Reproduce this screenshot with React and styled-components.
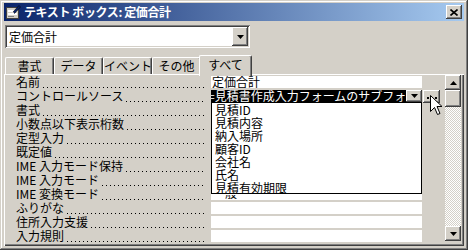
import React from 'react';
import styled, { createGlobalStyle } from 'styled-components';

// Access property sheet — classic Windows look

const GlobalStyle = createGlobalStyle`
  html, body {
    margin: 0;
    padding: 0;
    background: #d4d0c8;
  }
  body {
    font-family: "MS UI Gothic", "Noto Sans CJK JP", sans-serif;
    font-size: 12px;
    color: #000;
  }
`;

const raised = `
  box-shadow: inset -1px -1px #404040, inset 1px 1px #fff,
    inset -2px -2px #808080, inset 2px 2px #d4d0c8;
`;

const sunken = `
  box-shadow: inset 1px 1px #808080, inset -1px -1px #fff,
    inset 2px 2px #404040, inset -2px -2px #d4d0c8;
`;

const labels = [
  '名前',
  'コントロールソース',
  '書式',
  '小数点以下表示桁数',
  '定型入力',
  '既定値',
  'IME 入力モード保持',
  'IME 入力モード',
  'IME 変換モード',
  'ふりがな',
  '住所入力支援',
  '入力規則',
];

// values hidden under the open list are left empty
const values = ['定価合計', '', '', '', '', '', '', '', '', '', '', ''];

const fields = ['見積ID', '見積内容', '納入場所', '顧客ID', '会社名', '氏名', '見積有効期限'];

const tabs = ['書式', 'データ', 'イベント', 'その他', 'すべて'];

//-----*-----*-----*-----*-----//

const Window = styled.div`
  box-sizing: border-box;
  width: 468px;
  height: 250px;
  padding: 3px 4px 4px;
  background: #d4d0c8;
  box-shadow: inset -1px -1px #404040, inset 1px 1px #d4d0c8,
    inset -2px -2px #808080, inset 2px 2px #fff;
  display: flex;
  flex-direction: column;
  overflow: hidden;
  position: relative;
`;

const TitleBar = styled.div`
  height: 18px;
  flex-shrink: 0;
  display: flex;
  align-items: center;
  padding: 0 2px 0 1px;
  background: linear-gradient(to right, #0a246a, #a6caf0);
  color: #fff;
  font-weight: bold;
  font-size: 12px;
`;

const TitleText = styled.span`
  flex: 1;
  margin-left: 3px;
  line-height: 18px;
  white-space: pre;
  letter-spacing: -0.4px;
`;

const CloseButton = styled.div`
  width: 16px;
  height: 14px;
  background: #d4d0c8;
  ${raised}
  display: flex;
  align-items: center;
  justify-content: center;
`;

const Combo = styled.div`
  box-sizing: border-box;
  margin: 4px 0 0 1px;
  width: 245px;
  height: 23px;
  padding: 2px;
  flex-shrink: 0;
  background: #fff;
  ${sunken}
  display: flex;
`;

const ComboText = styled.div`
  flex: 1;
  padding-left: 2px;
  line-height: 19px;
`;

const ArrowButton = styled.div`
  width: 16px;
  flex-shrink: 0;
  background: #d4d0c8;
  ${raised}
  display: flex;
  align-items: center;
  justify-content: center;
`;

const TabStrip = styled.div`
  display: flex;
  align-items: flex-end;
  height: 19px;
  margin-top: 7px;
  padding-left: 1px;
  flex-shrink: 0;
  position: relative;
  z-index: 1;
`;

const Tab = styled.div`
  box-sizing: border-box;
  width: ${p => (p.$active ? 53 : 49)}px;
  height: ${p => (p.$active ? 21 : 17)}px;
  margin: 0 0 ${p => (p.$active ? -2 : 0)}px ${p => (p.$active ? -2 : 0)}px;
  border-top: 1px solid #fff;
  border-left: 1px solid #fff;
  border-right: 1px solid #404040;
  box-shadow: inset -1px 0 #808080;
  border-radius: 2px 2px 0 0;
  background: #d4d0c8;
  text-align: center;
  line-height: ${p => (p.$active ? 17 : 16)}px;
  white-space: nowrap;
`;

const Panel = styled.div`
  flex: 1;
  display: flex;
  align-items: flex-start;
  position: relative;
  border-top: 1px solid #fff;
  border-left: 1px solid #fff;
  box-shadow: inset -1px -1px #404040, inset -2px -2px #808080;
  padding: 0 3px 0 0;
`;

const Rows = styled.div`
  width: 440px;
`;

const Row = styled.div`
  display: grid;
  grid-template-columns: 206px 211px 23px;
  height: 14px;
`;

const Label = styled.div`
  display: flex;
  align-items: center;
  padding-left: 11px;
  white-space: nowrap;
  line-height: 14px;
`;

const Leader = styled.span`
  flex: 1;
  height: 1px;
  margin: 10px 6px 0 3px;
  background: linear-gradient(to right, #000 1px, transparent 1px) 0 0 / 4px 1px repeat-x;
`;

const Value = styled.div`
  margin-top: 1px;
  height: 12px;
  display: flex;
  background: ${p => (p.$active ? '#000' : '#fff')};
  color: ${p => (p.$active ? '#fff' : '#000')};
  overflow: ${p => (p.$active ? 'hidden' : 'visible')};
`;

const ValueText = styled.div`
  flex: 1;
  min-width: 0;
  overflow: hidden;
  padding-left: ${p => (p.$active ? 0 : 1)}px;
  text-indent: ${p => (p.$active ? -3 : 0)}px;
  line-height: 12px;
  white-space: nowrap;
`;

const BuilderButton = styled.div`
  box-sizing: border-box;
  width: 17px;
  height: 13px;
  margin: 1px 0 0 1px;
  background: #d4d0c8;
  ${raised}
  display: flex;
  align-items: center;
  justify-content: center;
  gap: 2px;
  padding-top: 3px;

  & i {
    width: 2px;
    height: 2px;
    background: #000;
  }
`;

const DropList = styled.div`
  position: absolute;
  left: 206px;
  top: 27px;
  box-sizing: border-box;
  width: 211px;
  height: 92px;
  border: 1px solid #000;
  background: #fff;
  z-index: 2;
`;

const DropItem = styled.div`
  height: 13px;
  line-height: 13px;
  padding-left: 3px;
  white-space: nowrap;
`;

// the bottom of "一般" peeks out below the open list
const PeekText = styled.div`
  position: absolute;
  left: 220px;
  top: 120px;
  height: 4px;
  overflow: hidden;
  line-height: 12px;
  z-index: 1;
`;

const ScrollBar = styled.div`
  width: 16px;
  height: 166px;
  display: flex;
  flex-direction: column;
`;

const ScrollButton = styled.div`
  height: 15px;
  flex-shrink: 0;
  background: #d4d0c8;
  ${raised}
  display: flex;
  align-items: center;
  justify-content: center;
`;

const Thumb = styled.div`
  height: 17px;
  flex-shrink: 0;
  background: #d4d0c8;
  ${raised}
`;

const Track = styled.div`
  flex: 1;
  background: repeating-conic-gradient(#fff 0 25%, #d4d0c8 0 50%) 0 0 / 2px 2px;
`;

const Cursor = styled.svg`
  position: absolute;
  left: 430px;
  top: 95px;
  z-index: 3;
`;

//-----*-----*-----*-----*-----//

const Arrow = ({ up }) => (
  <svg width="7" height="4" viewBox="0 0 7 4">
    <path d={up ? 'M3.5 0 L7 4 L0 4 Z' : 'M0 0 L7 0 L3.5 4 Z'} fill="#000" />
  </svg>
);

const TitleIcon = () => (
  <svg width="16" height="16" viewBox="0 0 16 16">
    <rect x="1.5" y="3.5" width="12" height="11" fill="#d4d0c8" stroke="#404040" />
    <rect x="3" y="6" width="9" height="2" fill="#fff" />
    <rect x="3" y="9" width="9" height="2" fill="#fff" />
    <rect x="3" y="12" width="6" height="1" fill="#808080" />
    <path d="M8 8 L14 1.5 L15.5 3 L9.5 9.5 Z" fill="#0a246a" stroke="#000" strokeWidth="0.6" />
    <path d="M8 8 L7.5 10 L9.5 9.5 Z" fill="#fff" />
  </svg>
);

function App() {
  return (
    <>
      <GlobalStyle />
      <Window>
        <TitleBar>
          <TitleIcon />
          <TitleText>テキスト ボックス: 定価合計</TitleText>
          <CloseButton>
            <svg width="8" height="7" viewBox="0 0 8 7">
              <path d="M0.5 0.5 L7.5 6.5 M7.5 0.5 L0.5 6.5" stroke="#000" strokeWidth="1.6" />
            </svg>
          </CloseButton>
        </TitleBar>

        <Combo>
          <ComboText>定価合計</ComboText>
          <ArrowButton>
            <Arrow />
          </ArrowButton>
        </Combo>

        <TabStrip>
          {tabs.map((t, i) => (
            <Tab key={t} $active={i === tabs.length - 1}>{t}</Tab>
          ))}
        </TabStrip>

        <Panel>
          <Rows>
            {labels.map((l, i) => (
              <Row key={l}>
                <Label>
                  {l}
                  <Leader />
                </Label>
                {i === 1 ? (
                  <Value $active>
                    <ValueText $active>=見積書作成入力フォームのサブフォーム</ValueText>
                    <ArrowButton>
                      <Arrow />
                    </ArrowButton>
                  </Value>
                ) : (
                  <Value>
                    <ValueText>{values[i]}</ValueText>
                  </Value>
                )}
                <div>
                  {i === 1 && (
                    <BuilderButton>
                      <i />
                      <i />
                      <i />
                    </BuilderButton>
                  )}
                </div>
              </Row>
            ))}
          </Rows>

          <ScrollBar>
            <ScrollButton>
              <Arrow up />
            </ScrollButton>
            <Thumb />
            <Track />
            <ScrollButton>
              <Arrow />
            </ScrollButton>
          </ScrollBar>

          <DropList>
            {fields.map(f => (
              <DropItem key={f}>{f}</DropItem>
            ))}
          </DropList>
          <PeekText>
            <div style={{ marginTop: -8 }}>般</div>
          </PeekText>
        </Panel>

        <Cursor width="13" height="21" viewBox="0 0 13 21">
          <path
            d="M0.5 0.5 L0.5 16.5 L4.5 12.5 L7.5 19.5 L10 18.5 L7 11.5 L12 11.5 Z"
            fill="#fff"
            stroke="#000"
            strokeWidth="1"
          />
        </Cursor>
      </Window>
    </>
  );
}

export default App;
